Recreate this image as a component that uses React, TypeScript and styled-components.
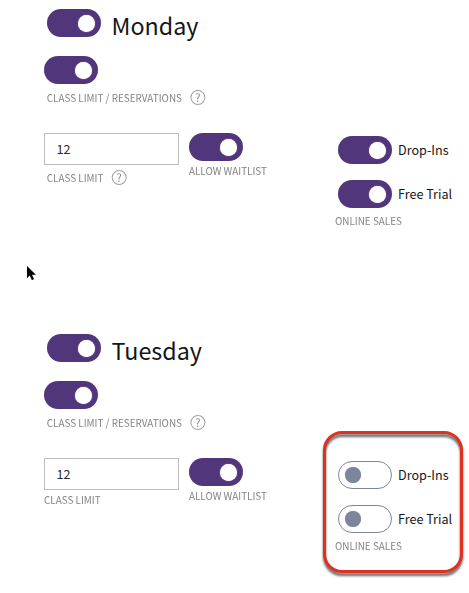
import React from "react";
import styled, { createGlobalStyle } from "styled-components";

const GlobalStyle = createGlobalStyle`
  * { box-sizing: border-box; }
  body {
    margin: 0;
    background: #fff;
    color: #161616;
    font-family: "Noto Sans CJK SC", "Open Sans", sans-serif;
    overflow: hidden;
  }
`;

const Page = styled.main`
  position: relative;
  width: 469px;
  height: 593px;
  overflow: hidden;
`;

const Day = styled.section`
  height: 325px;
  padding: 9px 0 0 44px;
`;

const DayHeader = styled.header`
  display: flex;
  height: 28px;
  padding-left: 3px;
  margin-bottom: 19px;
`;

const DayName = styled.h2`
  margin: 0 0 0 10.5px;
  font-size: 23.3px;
  font-weight: 400;
  line-height: 33px;
`;

const Track = styled.button<{ $on: boolean }>`
  display: flex;
  flex: none;
  align-items: center;
  width: 54px;
  height: 28px;
  padding: ${(p) => (p.$on ? "0 6px" : "0 5.5px 1px")};
  justify-content: ${(p) => (p.$on ? "flex-end" : "flex-start")};
  border: ${(p) => (p.$on ? "0" : "1px solid #7c859b")};
  border-radius: 14px;
  background: ${(p) => (p.$on ? "#51367c" : "#fff")};
`;

const Knob = styled.span<{ $on: boolean }>`
  width: ${(p) => (p.$on ? 17 : 16)}px;
  height: ${(p) => (p.$on ? 17 : 16)}px;
  border-radius: 50%;
  background: ${(p) => (p.$on ? "#fff" : "#7c859b")};
  box-shadow: 0 0 1px ${(p) => (p.$on ? "#d8d0dc" : "#a8a8a8")};
`;

/* Captions are set in a slightly condensed face. */
const condense = 0.915;

const Caption = styled.div<{ $indent?: number }>`
  display: flex;
  align-items: center;
  height: 16px;
  padding-left: ${(p) => p.$indent ?? 0}px;
  font-size: 10.8px;
  line-height: 16px;
  color: #858585;
  white-space: nowrap;
  transform: scaleX(${condense});
  transform-origin: left center;
`;

const ReservationsCaption = styled(Caption)`
  margin-top: 5px;
`;

const Help = styled.span`
  display: flex;
  align-items: center;
  justify-content: center;
  width: 15px;
  height: 15px;
  margin-left: 9px;
  border: 1px solid #a0a0a0;
  border-radius: 50%;
  font-size: 11px;
  line-height: 13px;
  transform: scaleX(${1 / condense});
  transform-origin: left center;
`;

const Settings = styled.div`
  display: flex;
  margin-top: 28px;
`;

const LimitField = styled.div`
  width: 135px;
  margin-right: 10px;
`;

const LimitInput = styled.input`
  display: block;
  width: 135px;
  height: 32px;
  margin: 0;
  padding: 0 11.5px 1px;
  border: 1px solid #bdbdbd;
  background: #fff;
  color: #292929;
  font: 12.6px/29px "Noto Sans CJK SC", "Open Sans", sans-serif;
  outline: 0;
`;

const LimitCaption = styled(Caption)`
  margin-top: 1px;
`;

const HelpCaption = styled(Caption)`
  margin-top: 4px;
`;

const WaitlistField = styled.div`
  width: 147px;
`;

const WaitlistCaption = styled(Caption)`
  margin-top: 1px;
`;

const Sales = styled.div`
  position: relative;
  display: flex;
  flex-direction: column;
  gap: 16px;
  padding-top: 3px;
`;

const SalesOption = styled.label`
  display: flex;
  align-items: center;
  gap: 6px;
  height: 28px;
  padding-left: 2px;
  font-size: 12.6px;
  line-height: 28px;
  white-space: nowrap;
`;

const SalesCaption = styled(Caption)`
  margin: -12px 0 0 -1px;
`;

const Callout = styled.div`
  position: absolute;
  left: -13px;
  top: -27px;
  width: 140px;
  height: 142px;
  border: 3px solid #e03020;
  border-radius: 19px;
  filter: drop-shadow(0 3px 1px rgba(0, 0, 0, 0.6));
  pointer-events: none;
`;

const Pointer = styled.svg`
  position: absolute;
  left: 25px;
  top: 264px;
`;

function Toggle({ on = true, label }: { on?: boolean; label: string }) {
  return (
    <Track type="button" role="switch" aria-checked={on} aria-label={label} $on={on}>
      <Knob $on={on} />
    </Track>
  );
}

interface DayProps {
  name: string;
  limitHelp?: boolean;
  salesOn?: boolean;
}

function DaySettings({ name, limitHelp = false, salesOn = true }: DayProps) {
  return (
    <Day>
      <DayHeader>
        <Toggle label={name} />
        <DayName>{name}</DayName>
      </DayHeader>
      <Toggle label="Class limit / reservations" />
      <ReservationsCaption $indent={3}>
        <span>CLASS LIMIT / RESERVATIONS</span>
        <Help>?</Help>
      </ReservationsCaption>
      <Settings>
        <LimitField>
          <LimitInput defaultValue="12" aria-label="Class limit" />
          {limitHelp ? (
            <HelpCaption $indent={3}>
              <span>CLASS LIMIT</span>
              <Help>?</Help>
            </HelpCaption>
          ) : (
            <LimitCaption>CLASS LIMIT</LimitCaption>
          )}
        </LimitField>
        <WaitlistField>
          <Toggle label="Allow waitlist" />
          <WaitlistCaption>ALLOW WAITLIST</WaitlistCaption>
        </WaitlistField>
        <Sales>
          {["Drop-Ins", "Free Trial"].map((option) => (
            <SalesOption key={option}>
              <Toggle on={salesOn} label={option} />
              <span>{option}</span>
            </SalesOption>
          ))}
          <SalesCaption>ONLINE SALES</SalesCaption>
          {!salesOn && <Callout />}
        </Sales>
      </Settings>
    </Day>
  );
}

export default function App() {
  return (
    <Page>
      <GlobalStyle />
      <DaySettings name="Monday" limitHelp />
      <DaySettings name="Tuesday" salesOn={false} />
      <Pointer width="13" height="19" viewBox="0 0 13 19" aria-hidden="true">
        <path
          d="M2 2V14L4.8 11.4L6.8 16L9 15.2L7 10.8H10.8Z"
          fill="#000"
          stroke="#ececec"
          strokeWidth="1"
          paintOrder="stroke"
        />
      </Pointer>
    </Page>
  );
}
